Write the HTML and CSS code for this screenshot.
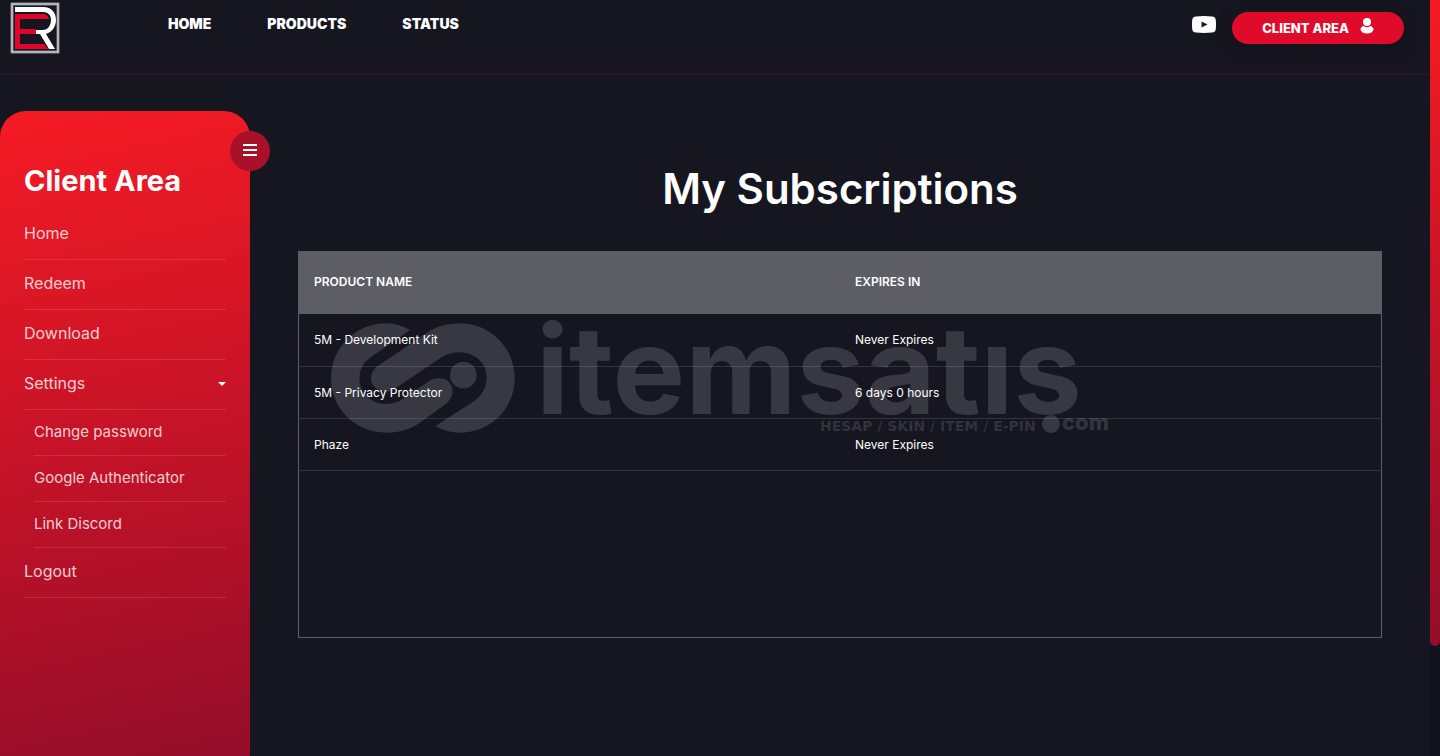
FILE: index.html
```html
<!DOCTYPE html>
<html lang="en">
<head>
  <meta charset="UTF-8">
  <meta name="viewport" content="width=device-width, initial-scale=1">
  <title>Client Area - My Subscriptions</title>
  <link rel="stylesheet" href="styles.css">
</head>
<body>
  <div class="page">
    <header class="header">
      <a class="logo" href="#" aria-label="ER">
        <svg width="50" height="52" viewBox="0 0 50 52">
          <rect x="2" y="2" width="46" height="48" fill="#161621" stroke="#85878b" stroke-width="3"/>
          <rect x="2" y="2" width="46" height="48" fill="none" stroke="#e2e2e2" stroke-width="1"/>
          <path fill="#e4032b" d="M5 12H34Q38 13 39 17H10V27H26V32H10V42H34L38 47H5Z"/>
          <path fill="#fff" d="M5 5H33C42 5 46 11 46 18C46 25 42 30 36 32L45 47H39L30 32H26V28H33C38 28 41 23 41 18C41 13 38 10 33 10H5Z"/>
        </svg>
      </a>
      <nav class="nav">
        <a href="#">HOME</a>
        <a href="#">PRODUCTS</a>
        <a href="#">STATUS</a>
      </nav>
      <div class="actions">
        <a class="youtube" href="#" aria-label="YouTube">
          <svg width="24" height="17" viewBox="0 0 24 17">
            <path fill="#fff" fill-rule="evenodd" d="M4 .4Q12-.4 20 .4Q23.6.7 23.8 4Q24.2 8.500 23.800 13Q23.600 16.300 20 16.600Q12 17.400 4 16.600Q.4 16.300.2 13Q-.2 8.500.2 4Q.4.7 4 .4ZM9.500 5.500V11.500L15.500 8.500Z"/>
          </svg>
        </a>
        <a class="client-btn" href="#">
          CLIENT AREA
          <svg width="14" height="16" viewBox="0 0 14 16">
            <circle cx="7" cy="4" r="4" fill="#fff"/>
            <path fill="#fff" d="M3.500 8Q7 10.500 10.500 8Q13.500 9 13.500 11.500Q12.500 15.500 7 15.500Q1.500 15.500.5 11.500Q.5 9 3.500 8Z"/>
          </svg>
        </a>
      </div>
    </header>

    <div class="layout">
      <aside class="sidebar">
        <button class="toggle" type="button" aria-label="Toggle Menu">
          <svg width="14" height="12" viewBox="0 0 14 12">
            <path stroke="#fff" stroke-width="2" d="M0 1H14M0 6H14M0 11H14"/>
          </svg>
        </button>
        <h2>Client Area</h2>
        <ul class="menu">
          <li><a href="#">Home</a></li>
          <li><a href="#">Redeem</a></li>
          <li><a href="#">Download</a></li>
          <li>
            <a class="dropdown" href="#">Settings</a>
            <ul class="submenu">
              <li><a href="#">Change password</a></li>
              <li><a href="#">Google Authenticator</a></li>
              <li><a href="#">Link Discord</a></li>
            </ul>
          </li>
          <li><a href="#">Logout</a></li>
        </ul>
      </aside>

      <main class="content">
        <h1>My Subscriptions</h1>
        <div class="panel">
          <table>
            <thead>
              <tr><th>PRODUCT NAME</th><th>EXPIRES IN</th></tr>
            </thead>
            <tbody>
              <tr><td>5M - Development Kit</td><td>Never Expires</td></tr>
              <tr><td>5M - Privacy Protector</td><td>6 days 0 hours</td></tr>
              <tr><td>Phaze</td><td>Never Expires</td></tr>
            </tbody>
          </table>
          <svg class="watermark" width="784" height="118" viewBox="0 0 784 118">
            <g transform="translate(-10 -10) scale(.3333)">
              <path d="M270 60Q235 40 200 40C105 40 33 115 33 205C33 295 105 368 200 368Q250 368 290 345L380 280C412 252 398 205 358 205Q340 205 325 215L240 272Q220 282 197 282C150 282 118 245 118 205Q118 165 150 143Z"/>
              <path d="M170 170L330 62Q370 40 420 40C512 40 584 115 584 205C584 295 512 368 420 368Q380 368 346 348L455 278Q500 250 500 200C500 160 465 127 418 127Q390 127 365 142L215 242C195 252 153 240 153 205Q153 185 170 170Z"/>
              <circle cx="430" cy="195" r="40"/>
            </g>
            <text class="wm-name" x="206" y="94">itemsatıs</text>
            <text class="wm-tag" x="490" y="111">HESAP / SKIN / ITEM / E-PIN</text>
            <circle cx="721" cy="104" r="9"/>
            <text class="wm-com" x="732" y="110">com</text>
          </svg>
        </div>
      </main>
    </div>
  </div>
  <div class="scroll-track"><div class="scroll-thumb"></div></div>
</body>
</html>
```

FILE: styles.css
```css
* {
  box-sizing: border-box;
}
body {
  margin: 0;
  display: flex;
  min-height: 100vh;
  background: #161621;
  color: #fff;
  font-family: Inter, "Open Sans", sans-serif;
}
a {
  color: inherit;
  text-decoration: none;
}
ul {
  list-style: none;
  margin: 0;
  padding: 0;
}
.page {
  flex: 1;
  display: flex;
  flex-direction: column;
}

/* header */
.header {
  display: flex;
  align-items: flex-start;
  height: 75px;
  padding: 2px 26px 0 10px;
  border-bottom: 2px solid #2d1520;
}
.logo svg {
  display: block;
}
.nav {
  display: flex;
  gap: 56px;
  margin-left: 108px;
  padding-top: 12px;
  font-size: 14px;
  line-height: 20px;
  font-weight: 900;
}
.actions {
  display: flex;
  align-items: center;
  gap: 16px;
  margin-left: auto;
  padding-top: 10px;
}
.youtube {
  display: flex;
  padding-bottom: 7px;
}
.client-btn {
  display: flex;
  align-items: center;
  gap: 11px;
  height: 32px;
  padding: 0 30px;
  border-radius: 16px;
  background: #e00a2b;
  box-shadow: 0 6px 20px rgba(0, 0, 0, 0.2);
  font-size: 13px;
  font-weight: 800;
}
.client-btn svg {
  margin-bottom: 4px;
}

/* sidebar */
.layout {
  flex: 1;
  display: flex;
  padding-top: 36px;
}
.sidebar {
  position: relative;
  width: 250px;
  padding: 48px 24px 24px;
  border-radius: 26px 26px 0 0;
  background: linear-gradient(168deg, #f51b24 0%, #c61327 50%, #930d2a 100%);
}
.toggle {
  position: absolute;
  top: 20px;
  right: -20px;
  display: flex;
  align-items: center;
  justify-content: center;
  width: 40px;
  height: 40px;
  padding: 0 0 2px;
  border: none;
  border-radius: 50%;
  background: #a9112a;
  cursor: pointer;
}
.sidebar h2 {
  margin: 0 0 7px;
  font-size: 29px;
  line-height: 44px;
  font-weight: 700;
}
.menu a {
  display: block;
  padding: 11px 0 13px;
  border-bottom: 1px solid rgba(255, 255, 255, 0.12);
  color: rgba(255, 255, 255, 0.8);
  font-size: 16px;
  line-height: 25px;
}
.menu .submenu {
  padding-left: 10px;
}
.menu .submenu a {
  padding: 10px 0 12px;
  font-size: 15px;
  line-height: 23px;
}
.menu .dropdown {
  display: flex;
  align-items: center;
  justify-content: space-between;
}
.dropdown::after {
  content: "";
  border: 4px solid transparent;
  border-top-color: #fff;
  border-bottom: none;
}

/* content */
.content {
  flex: 1;
  padding: 48px;
}
.content h1 {
  margin: 0 0 32px;
  font-size: 42px;
  line-height: 60px;
  font-weight: 600;
  text-align: center;
}
.panel {
  position: relative;
  min-height: 387px;
  border: 1px solid #5d5d65;
}
table {
  width: 100%;
  table-layout: fixed;
  border-collapse: collapse;
  font-size: 12px;
}
th, td {
  padding: 0 15px;
  text-align: left;
}
th {
  height: 62px;
  padding-bottom: 3px;
  background: #5d5d65;
  font-weight: 600;
}
td {
  height: 52px;
  border-bottom: 1px solid #33333d;
}
.watermark {
  position: absolute;
  left: 31px;
  top: 68px;
  overflow: visible;
  fill: rgba(255, 255, 255, 0.15);
  pointer-events: none;
}
.wm-name {
  font-size: 122px;
  font-weight: 700;
}
.wm-tag {
  font-family: "DejaVu Sans", sans-serif;
  font-size: 14px;
  font-weight: 700;
  fill: rgba(255, 255, 255, 0.12);
}
.wm-com {
  font-size: 22px;
  font-weight: 800;
}

/* page scrollbar */
.scroll-track {
  width: 10px;
  background: #10121e;
}
.scroll-thumb {
  height: 646px;
  border-radius: 0 0 5px 5px;
  background: linear-gradient(#f51b24, #930d2a);
}
```
